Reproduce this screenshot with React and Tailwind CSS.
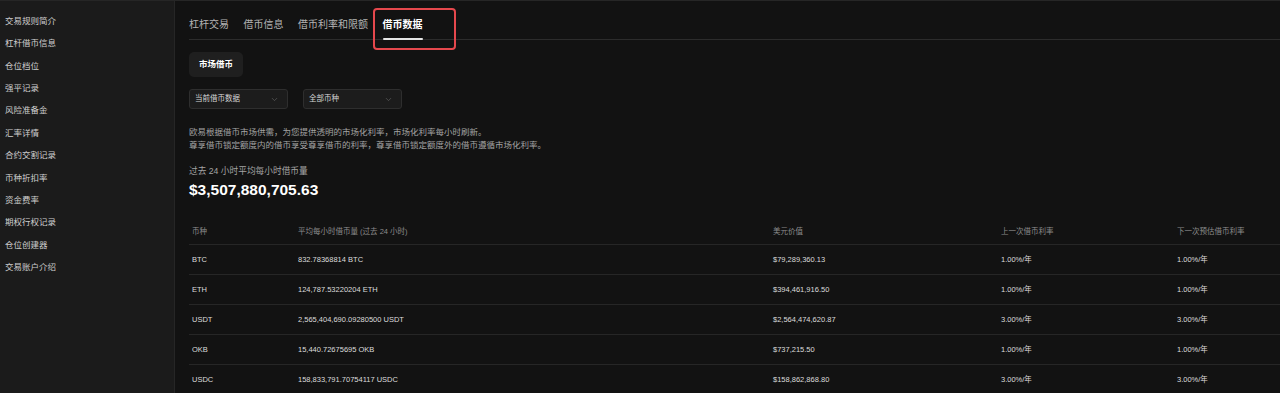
import { ChevronDown } from "lucide-react";

const FONT = { fontFamily: '"Liberation Sans", "Noto Sans CJK SC", sans-serif' };

const sideLinks = [
  "交易规则简介",
  "杠杆借币信息",
  "仓位档位",
  "强平记录",
  "风险准备金",
  "汇率详情",
  "合约交割记录",
  "币种折扣率",
  "资金费率",
  "期权行权记录",
  "仓位创建器",
  "交易账户介绍",
];

const tabs = ["杠杆交易", "借币信息", "借币利率和限额", "借币数据"];

const rows = [
  ["BTC", "832.78368814 BTC", "$79,289,360.13", "1.00%/年", "1.00%/年"],
  ["ETH", "124,787.53220204 ETH", "$394,461,916.50", "1.00%/年", "1.00%/年"],
  ["USDT", "2,565,404,690.09280500 USDT", "$2,564,474,620.87", "3.00%/年", "3.00%/年"],
  ["OKB", "15,440.72675695 OKB", "$737,215.50", "1.00%/年", "1.00%/年"],
  ["USDC", "158,833,791.70754117 USDC", "$158,862,868.80", "3.00%/年", "3.00%/年"],
];

export default function App() {
  return (
    <div style={FONT} className="w-[1280px] h-[393px] overflow-hidden flex bg-[#121212] text-white border-t border-[#262626]">
      {/* Sidebar */}
      <aside className="w-[175px] shrink-0 bg-[#1b1b1b] border-r border-[#262626] pt-[9px] pl-[5px]">
        {sideLinks.map((l) => (
          <div key={l} className="h-[22.4px] flex items-center text-[8.5px] text-[#cfcfcf]">
            {l}
          </div>
        ))}
      </aside>

      {/* Main */}
      <main className="flex-1 pl-[14px] relative">
        {/* Tabs */}
        <div className="h-[39px] border-b border-[#2c2c2c] flex items-end gap-[14.5px]">
          {tabs.map((t, i) => (
            <div key={t} className="relative h-full flex items-center pt-[9px]">
              <span className={i === 3 ? "text-[10px] font-bold text-white" : "text-[10px] text-[#b4b4b4]"}>{t}</span>
              {i === 3 && <span className="absolute left-0 right-0 -bottom-[1px] h-[2px] bg-[#e6e6e6] rounded-full" />}
            </div>
          ))}
        </div>

        {/* annotation box */}
        <div className="absolute left-[198px] top-[7px] w-[83px] h-[42px] border-2 border-[#e5484d] rounded-[4px]" />

        <div className="mt-[12px] inline-flex items-center h-[25px] px-[10px] rounded-[5px] bg-[#1f1f1f] text-[8.5px] font-bold text-white">
          市场借币
        </div>

        <div className="mt-[12px] flex gap-[15px]">
          <Dropdown label="当前借币数据" />
          <Dropdown label="全部币种" />
        </div>

        <div className="mt-[17px] text-[8.5px] leading-[13px] text-[#a3a3a3]">
          <p>欧易根据借币市场供需，为您提供透明的市场化利率，市场化利率每小时刷新。</p>
          <p>尊享借币锁定额度内的借币享受尊享借币的利率，尊享借币锁定额度外的借币遵循市场化利率。</p>
        </div>

        <div className="mt-[12px] text-[8.7px] leading-[14px] text-[#a3a3a3]">过去 24 小时平均每小时借币量</div>
        <div className="mt-[2px] text-[15.5px] leading-[19px] font-bold text-white">$3,507,880,705.63</div>

        {/* Table */}
        <div className="mt-[21px] text-[7.5px]">
          <Row cells={["币种", "平均每小时借币量 (过去 24 小时)", "美元价值", "上一次借币利率", "下一次预估借币利率"]} header />
          {rows.map((r) => (
            <Row key={r[0]} cells={r} />
          ))}
        </div>
      </main>
    </div>
  );
}

function Dropdown({ label }) {
  return (
    <div className="w-[99px] h-[20px] flex items-center justify-between pl-[5px] pr-[8px] bg-[#1c1c1c] border border-[#2e2e2e] rounded-[3px]">
      <span className="text-[7.5px] text-[#d6d6d6]">{label}</span>
      <ChevronDown className="w-[9px] h-[9px] text-[#6f6f6f]" strokeWidth={1.5} />
    </div>
  );
}

function Row({ cells, header }) {
  return (
    <div
      className={
        header
          ? "h-[24px] grid grid-cols-[106px_475px_228px_176px_1fr] items-center pl-[3px] text-[#8c8c8c]"
          : "h-[30px] grid grid-cols-[106px_475px_228px_176px_1fr] items-center pl-[3px] border-t border-[#262626] text-[#dcdcdc]"
      }
    >
      {cells.map((c, i) => (
        <div key={i} className="whitespace-nowrap">{c}</div>
      ))}
    </div>
  );
}
